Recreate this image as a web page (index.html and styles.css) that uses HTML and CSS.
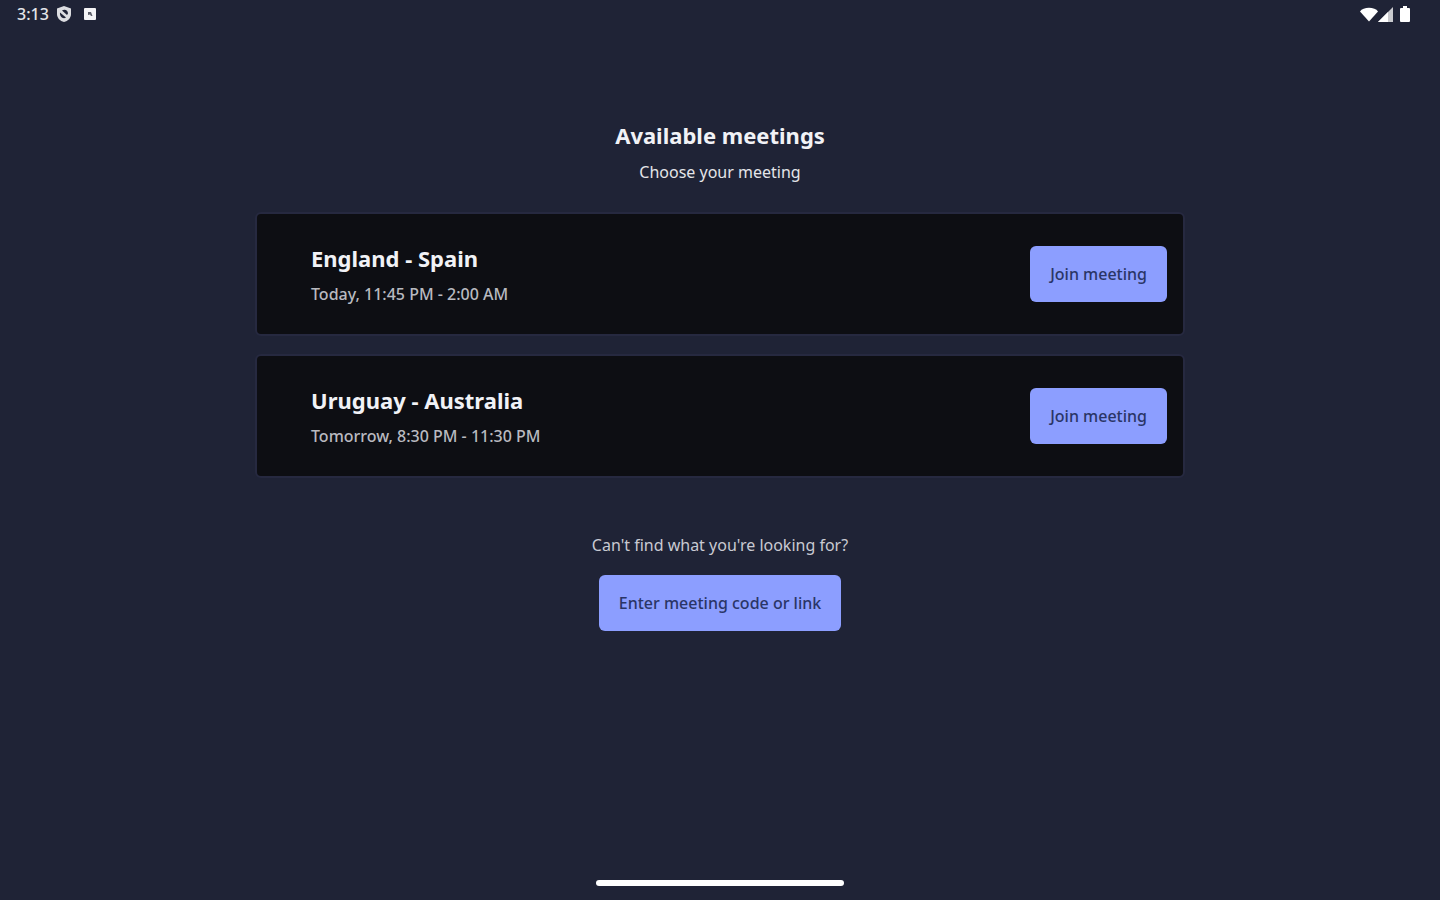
FILE: index.html
```html
<!DOCTYPE html>
<html lang="en">
<head>
  <meta charset="utf-8">
  <title>Available meetings</title>
  <meta name="viewport" content="width=device-width, initial-scale=1">
  <link rel="stylesheet" href="styles.css">
</head>
<body>
  <header class="status-bar">
    <div class="status-left">
      <span class="clock">3:13</span>
      <svg class="icon-shield" width="14" height="16" viewBox="0 0 14 16">
        <path d="M7 0 L14 2.500 V8 C14 12 11 15 7 16 C3 15 0 12 0 8 V2.500 Z" fill="#dcdde1"/>
        <path d="M5 4.500 C8 2.500 11 4.500 11 7.500 L10 9 Z M3 6.500 L9 11.500 C6 13.500 2.500 10.500 3 6.500 Z" fill="#1f2336"/>
      </svg>
      <svg class="icon-app" width="12" height="12" viewBox="0 0 12 12">
        <rect width="12" height="12" rx="1" fill="#f4f4f6"/>
        <path d="M4 4 H7 L8.500 8 H7 L6 6.500 L4 7 Z" fill="#5c5e69"/>
      </svg>
    </div>
    <div class="status-right">
      <svg width="18" height="15" viewBox="0 0 18 15">
        <path d="M0 4.500 C3 -0.500 15 -0.500 18 4.500 L9 14.500 Z" fill="#fff"/>
      </svg>
      <svg width="15" height="15" viewBox="0 0 15 15">
        <path d="M15 0 V15 H0 Z" fill="#c9cace"/>
        <path d="M10 5 V15 H0 Z" fill="#fff"/>
      </svg>
      <svg class="icon-battery" width="10" height="16" viewBox="0 0 10 16">
        <path d="M3 0 H7 V2 H9 Q10 2 10 3 V15 Q10 16 9 16 H1 Q0 16 0 15 V3 Q0 2 1 2 H3 Z" fill="#fff"/>
      </svg>
    </div>
  </header>

  <main class="content">
    <h1 class="title">Available meetings</h1>
    <p class="subtitle">Choose your meeting</p>

    <ul class="meetings">
      <li class="meeting">
        <div class="meeting-info">
          <h2 class="meeting-name">England - Spain</h2>
          <p class="meeting-time">Today, 11:45 PM - 2:00 AM</p>
        </div>
        <button class="btn" type="button">Join meeting</button>
      </li>
      <li class="meeting">
        <div class="meeting-info">
          <h2 class="meeting-name">Uruguay - Australia</h2>
          <p class="meeting-time">Tomorrow, 8:30 PM - 11:30 PM</p>
        </div>
        <button class="btn" type="button">Join meeting</button>
      </li>
    </ul>

    <p class="hint">Can't find what you're looking for?</p>
    <button class="btn" type="button">Enter meeting code or link</button>
  </main>

  <footer class="nav-bar"><div class="nav-handle"></div></footer>
</body>
</html>
```

FILE: styles.css
```css
* { box-sizing: border-box; }

body {
  margin: 0;
  min-height: 100vh;
  display: flex;
  flex-direction: column;
  background: #1f2336;
  color: #f1f2f6;
  font-family: "Noto Sans", sans-serif;
}

h1, h2, p, ul { margin: 0; padding: 0; }

/* status bar */
.status-bar {
  display: flex;
  justify-content: space-between;
  align-items: center;
  height: 28px;
  padding: 0 30px 0 17px;
}
.status-left, .status-right { display: flex; align-items: center; }
.clock { font-size: 16px; line-height: 24px; font-weight: 500; color: #e4e5e9; }
.icon-shield { margin-left: 8px; }
.icon-app { margin-left: 13px; }
.icon-battery { margin-left: 7px; }

/* meetings */
.content {
  flex: 1;
  display: flex;
  flex-direction: column;
  align-items: center;
  width: 100%;
  max-width: 962px;
  margin: 0 auto;
  padding: 91px 16px 0;
}
.title, .meeting-name { font-size: 22px; line-height: 32px; font-weight: 700; }
.subtitle, .meeting-time, .hint { font-size: 16px; line-height: 24px; font-weight: 500; }
.subtitle { margin-top: 9px; font-weight: 400; color: #e4e5e9; }

.meetings {
  display: flex;
  flex-direction: column;
  gap: 18px;
  width: 100%;
  margin-top: 28px;
  list-style: none;
}
.meeting {
  display: flex;
  justify-content: space-between;
  align-items: center;
  padding: 28px 16px 28px 54px;
  background: #0d0e13;
  border: 2px solid #262940;
  border-radius: 6px;
}
.meeting-time { margin-top: 8px; color: #b9bac0; }

.btn {
  height: 56px;
  padding: 0 20px;
  border: 0;
  border-radius: 6px;
  background: #8c9eff;
  color: #2a3566;
  font-family: inherit;
  font-size: 16px;
  line-height: 24px;
  font-weight: 500;
  cursor: pointer;
}
.btn:hover { background: #9dacff; }

.hint { margin: 55px 0 18px; font-weight: 400; color: #c9cad2; }

/* gesture handle */
.nav-bar { display: flex; justify-content: center; padding-bottom: 14px; }
.nav-handle { width: 248px; height: 6px; border-radius: 3px; background: #fff; }
```
